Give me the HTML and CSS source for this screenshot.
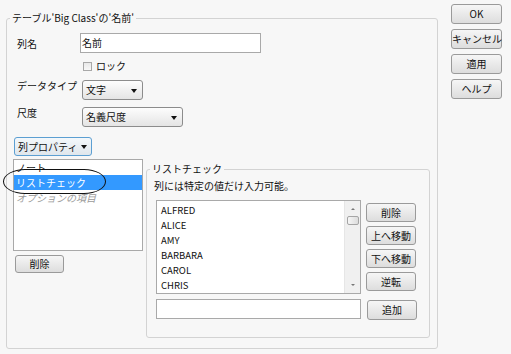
FILE: index.html
```html
<!DOCTYPE html>
<html lang="ja">
<head>
<meta charset="utf-8">
<title>列情報</title>
<link rel="stylesheet" href="styles.css">
</head>
<body>
<div class="dialog">
  <fieldset class="group outer">
    <legend>テーブル'Big Class'の'名前'</legend>
    <div class="row row-name">
      <span class="label">列名</span>
      <div class="textfield name-field">名前</div>
    </div>
    <div class="row row-lock">
      <span class="checkbox"></span><span class="check-text">ロック</span>
    </div>
    <div class="row row-type">
      <span class="label">データタイプ</span>
      <div class="combo combo-type">文字<span class="arrow"></span></div>
    </div>
    <div class="row row-scale">
      <span class="label">尺度</span>
      <div class="combo combo-scale">名義尺度<span class="arrow"></span></div>
    </div>
    <div class="btn menu-btn">列プロパティ<span class="arrow"></span></div>
    <div class="props">
      <div class="left-col">
        <div class="listbox props-list">
          <div class="item">ノート</div>
          <div class="item selected">リストチェック</div>
          <div class="item disabled">オプションの項目</div>
        </div>
        <div class="ellipse"></div>
        <div class="btn del-btn">削除</div>
      </div>
      <fieldset class="group inner">
        <legend>リストチェック</legend>
        <div class="desc">列には特定の値だけ入力可能。</div>
        <div class="list-row">
          <div class="listbox values">
            <div class="values-items">
              <div class="vitem">ALFRED</div>
              <div class="vitem">ALICE</div>
              <div class="vitem">AMY</div>
              <div class="vitem">BARBARA</div>
              <div class="vitem">CAROL</div>
              <div class="vitem">CHRIS</div>
            </div>
            <div class="scrollbar">
              <span class="sb-up"></span>
              <span class="sb-thumb"></span>
              <span class="sb-down"></span>
            </div>
          </div>
          <div class="list-btns">
            <div class="btn lbtn">削除</div>
            <div class="btn lbtn">上へ移動</div>
            <div class="btn lbtn">下へ移動</div>
            <div class="btn lbtn">逆転</div>
          </div>
        </div>
        <div class="add-row">
          <div class="textfield add-field"></div>
          <div class="btn lbtn">追加</div>
        </div>
      </fieldset>
    </div>
  </fieldset>
  <div class="side">
    <div class="btn sbtn">OK</div>
    <div class="btn sbtn">キャンセル</div>
    <div class="btn sbtn">適用</div>
    <div class="btn sbtn">ヘルプ</div>
  </div>
</div>
</body>
</html>
```

FILE: styles.css
```css
html, body {
  margin: 0;
  padding: 0;
  background: #f7f7f7;
}
body {
  font-family: "Noto Sans CJK JP", "Noto Sans", sans-serif;
  font-size: 10px;
  color: #111;
  width: 511px;
  height: 354px;
  overflow: hidden;
}
.dialog {
  display: flex;
  align-items: flex-start;
}
.group {
  margin: 0;
  border: 1px solid #d3d3d3;
  border-radius: 3px;
  min-width: 0;
  box-sizing: border-box;
}
.group legend {
  padding: 0 2px;
  line-height: 16px;
  height: 16px;
  font-size: 10px;
}
.outer {
  margin-left: 6px;
  margin-top: 10px;
  width: 432px;
  height: 339px;
  padding: 0 0 0 6px;
}
.outer > legend {
  margin-left: -3px;
}
.row {
  display: flex;
  align-items: flex-start;
}
.label {
  width: 63px;
  margin-left: 4px;
  line-height: 12px;
}
.row-name {
  margin-top: 7px;
}
.row-name .label {
  margin-top: 5px;
}
.textfield {
  box-sizing: border-box;
  height: 20px;
  background: #fff;
  border: 1px solid #a9a9a9;
  line-height: 18px;
  padding-left: 1px;
}
.name-field {
  width: 181px;
}
.row-lock {
  margin-top: 7px;
  height: 12px;
  align-items: center;
}
.checkbox {
  box-sizing: border-box;
  width: 9px;
  height: 9px;
  margin-left: 70px;
  border: 1px solid #a8a8a8;
  background: linear-gradient(#e9e9e9, #f8f8f8);
}
.check-text {
  margin-left: 4px;
  line-height: 12px;
}
.row-type {
  margin-top: 8px;
}
.row-type .label {
  margin-top: 0;
}
.combo {
  box-sizing: border-box;
  height: 20px;
  margin-left: 2px;
  border: 1px solid #8c8c8c;
  border-radius: 3px;
  background: linear-gradient(#fdfdfd, #e4e4e4);
  line-height: 18px;
  padding-left: 3px;
  display: flex;
  align-items: center;
  justify-content: space-between;
  padding-right: 5px;
}
.combo-type {
  width: 61px;
}
.combo-scale {
  width: 101px;
}
.row-scale {
  margin-top: 7px;
}
.arrow {
  width: 0;
  height: 0;
  border-left: 3px solid transparent;
  border-right: 3px solid transparent;
  border-top: 4px solid #111;
  margin-top: 1px;
}
.btn {
  box-sizing: border-box;
  border: 1px solid #9a9a9a;
  border-radius: 3px;
  background: linear-gradient(#f6f6f6, #dddddd);
  text-align: center;
  line-height: 17px;
  height: 19px;
}
.menu-btn {
  margin-top: 10px;
  margin-left: 1px;
  width: 78px;
  display: flex;
  align-items: center;
  justify-content: space-between;
  padding: 0 4px 0 3px;
  border-color: #5c9fd2;
  background: linear-gradient(#f4f8fb, #dfe6ec);
}
.props {
  display: flex;
  align-items: flex-start;
  margin-top: 3px;
}
.left-col {
  width: 130px;
  position: relative;
}
.listbox {
  box-sizing: border-box;
  background: #fff;
  border: 1px solid #a9a9a9;
}
.props-list {
  width: 130px;
  height: 92px;
}
.item {
  height: 15px;
  line-height: 15px;
  padding-left: 2px;
}
.item.selected {
  background: #3399ff;
  color: #fff;
}
.item.disabled {
  color: #9a9a9a;
  font-style: italic;
}
.ellipse {
  position: absolute;
  left: -10px;
  top: 10px;
  width: 103px;
  height: 25px;
  box-sizing: border-box;
  border: 1.5px solid #111;
  border-radius: 22px / 12.5px;
}
.del-btn {
  margin-top: 4px;
  margin-left: 2px;
  width: 49px;
  height: 18px;
  line-height: 16px;
}
.inner {
  margin-left: 3px;
  margin-top: 2px;
  width: 284px;
  height: 177px;
  padding: 0 0 0 7px;
}
.inner > legend {
  margin-left: -4px;
}
.desc {
  margin-top: 3px;
  line-height: 12px;
}
.list-row {
  display: flex;
  align-items: flex-start;
  margin-top: 8px;
  margin-left: 2px;
}
.values {
  width: 205px;
  height: 94px;
  display: flex;
}
.values-items {
  flex: 1;
  padding-top: 2px;
  padding-left: 4px;
  font-size: 9.5px;
}
.vitem {
  height: 15px;
  line-height: 15px;
}
.scrollbar {
  width: 15px;
  background: #f0f0f0;
  border-left: 1px solid #e6e6e6;
  display: flex;
  flex-direction: column;
  align-items: center;
}
.sb-up, .sb-down {
  width: 0;
  height: 0;
  border-left: 2px solid transparent;
  border-right: 2px solid transparent;
}
.sb-up {
  margin-top: 7px;
  border-bottom: 2px solid #777;
}
.sb-down {
  margin-top: auto;
  margin-bottom: 7px;
  border-top: 2px solid #777;
}
.sb-thumb {
  box-sizing: border-box;
  width: 12px;
  height: 9px;
  margin-top: 6px;
  border: 1px solid #a5a5a5;
  border-radius: 2px;
  background: linear-gradient(90deg, #f6f6f6, #dcdcdc);
}
.list-btns {
  display: flex;
  flex-direction: column;
  gap: 4px;
  margin-left: 5px;
  margin-top: 3px;
}
.lbtn {
  width: 50px;
  height: 19px;
}
.add-row {
  display: flex;
  align-items: flex-start;
  margin-top: 5px;
  margin-left: 2px;
}
.add-field {
  width: 205px;
}
.add-row .lbtn {
  margin-left: 6px;
  margin-top: 1px;
  height: 20px;
  line-height: 18px;
}
.side {
  margin-left: 13px;
  margin-top: 4px;
  display: flex;
  flex-direction: column;
  gap: 5px;
}
.sbtn {
  width: 51px;
  height: 20px;
  line-height: 18px;
  white-space: nowrap;
}
```
